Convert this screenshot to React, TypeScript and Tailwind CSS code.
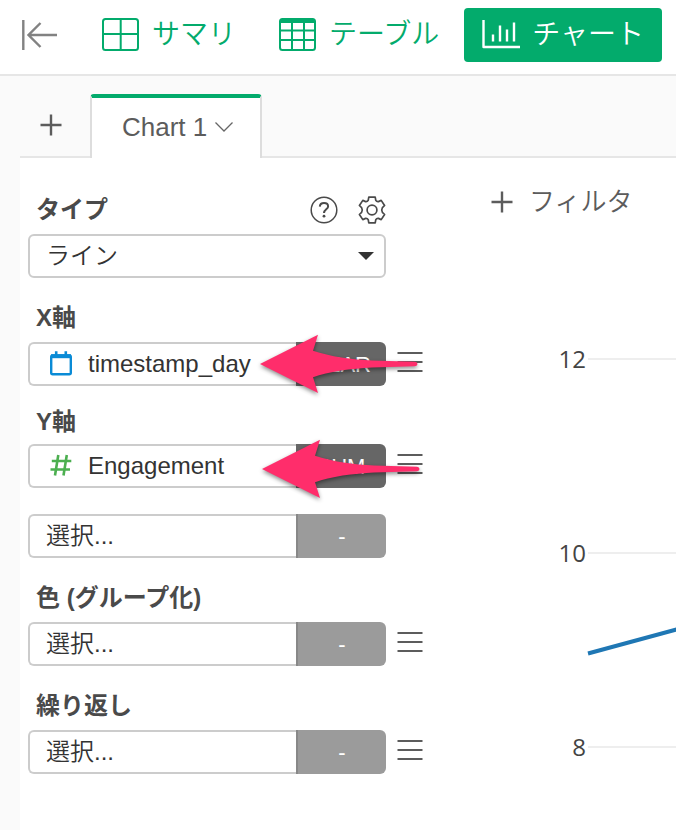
import type { ReactNode } from 'react';
import clsx from 'clsx';

const navItems = [
  { name: 'サマリ', icon: SummaryIcon, active: false },
  { name: 'テーブル', icon: TableIcon, active: false },
  { name: 'チャート', icon: ChartIcon, active: true },
];

const gridLines = [
  { label: '12', y: 119 },
  { label: '10', y: 313 },
  { label: '8', y: 507 },
];

function CollapseIcon() {
  return (
    <svg width="38" height="32" viewBox="0 0 38 32" fill="none" stroke="#828282" strokeWidth="2.4">
      <path d="M3.3 1v30M37 16H8M20.5 4 8.5 16l12 12" />
    </svg>
  );
}

function SummaryIcon() {
  return (
    <svg width="38" height="34" viewBox="0 0 38 34" fill="none" stroke="currentColor" strokeWidth="2">
      <rect x="1" y="1" width="35" height="31" rx="2.5" />
      <path d="M18.700 1v31M1 16h35" />
    </svg>
  );
}

function TableIcon() {
  return (
    <svg width="38" height="34" viewBox="0 0 38 34" fill="none" stroke="currentColor" strokeWidth="2">
      <rect x="1" y="1" width="35" height="31" rx="2.5" />
      <path d="M1 12.500h35M1 22h35M13 3v29M25 3v29" />
      <path d="M1 3h35" strokeWidth="4" />
    </svg>
  );
}

function ChartIcon() {
  return (
    <svg width="38" height="34" viewBox="0 0 38 34" fill="none" stroke="currentColor" strokeWidth="2.4">
      <path d="M1.500 2v27h36.500" strokeLinejoin="round" />
      <path d="M11 16.500v7M18 7.500v16M25 11.500v12M32 4.500v19" />
    </svg>
  );
}

function PlusIcon() {
  return (
    <svg width="22" height="22" viewBox="0 0 22 22" stroke="#5c5c5c" strokeWidth="2.4">
      <path d="M11 .5v21M.5 11h21" />
    </svg>
  );
}

function ChevronIcon() {
  return (
    <svg width="18" height="10" viewBox="0 0 18 10" fill="none" stroke="#666" strokeWidth="1.3">
      <path d="M.5.5 9 9 17.5.5" />
    </svg>
  );
}

function HelpIcon() {
  return (
    <svg width="28" height="28" viewBox="0 0 28 28" fill="none" stroke="#4a4a4a">
      <circle cx="14" cy="14" r="12.8" strokeWidth="1.5" />
      <path d="M9.800 10.600c.2-2.200 1.800-3.500 4.200-3.500 2.500 0 4.100 1.300 4.100 3.300 0 2.800-4.100 3-4.100 6.600" strokeWidth="2" />
      <circle cx="14" cy="20.200" r="1.400" fill="#4a4a4a" stroke="none" />
    </svg>
  );
}

function GearIcon() {
  return (
    <svg width="28" height="28" viewBox="0 0 28 28" fill="none" stroke="#4a4a4a" strokeWidth="1.7" strokeLinejoin="round">
      <circle cx="14" cy="14" r="4.900" />
      <path d="M10.800 1.200h6.400l.6 3.200q.8 1.400 2.600 1.200l2.800-1.200 3.400 5.100-2.200 2.100q-1.400 2.400 0 4.800l2.200 2.100-3.400 5.100-2.800-1.200q-1.800-.2-2.600 1.200l-.6 3.200h-6.400l-.6-3.200q-.8-1.400-2.600-1.200l-2.800 1.200-3.400-5.100 2.200-2.100q1.400-2.400 0-4.800L1.400 9.500l3.400-5.100 2.800 1.200q1.800.2 2.600-1.200z" />
    </svg>
  );
}

function CalendarIcon() {
  return (
    <svg width="22" height="26" viewBox="0 0 22 26" fill="none" stroke="#0a8bd6">
      <rect x="1.200" y="4.500" width="19.600" height="18.800" rx="1.500" strokeWidth="2.400" />
      <path d="M1 5.200h20" strokeWidth="4" />
      <path d="M6.200 .2v4M15.800 .2v4" strokeWidth="2.600" />
    </svg>
  );
}

function HashIcon() {
  return (
    <svg width="22" height="26" viewBox="0 0 22 26" fill="none" stroke="#4caf50" strokeWidth="2.600">
      <path d="M8.300 2 5 22.500M16.800 2 13.500 22.500M1.800 8h19.500M.5 16.500h19.500" />
    </svg>
  );
}

function MenuIcon() {
  return (
    <svg width="26" height="22" viewBox="0 0 26 22" stroke="#5c5c5c" strokeWidth="1.800">
      <path d="M.5 2h25M.5 11h25M.5 20h25" />
    </svg>
  );
}

// Pointer laid over a field, tip at the left
function Arrow({ className }: { className: string }) {
  return (
    <svg
      className={clsx('absolute pointer-events-none drop-shadow-[0_2px_2px_rgba(0,0,0,0.45)]', className)}
      width="160"
      height="60"
      viewBox="0 0 160 60"
      fill="#ff2d6b"
      aria-hidden="true"
    >
      <path d="M0 30 58 .7 53 16.700C70 22.500 92 25.500 112 26.500L155 27.800q2.500.4 2.500 2.200t-2.500 2.200L112 33.500C92 34.500 68 37.500 53 43.300L58 59z" />
    </svg>
  );
}

interface FieldProps {
  name: string;
  value: string;
  aggregate: string;
  icon?: ReactNode;
  menu?: boolean;
  children?: ReactNode;
}

function Field({ name, value, aggregate, icon, menu = true, children }: FieldProps) {
  return (
    <div className="relative flex items-center gap-[11px]">
      <div className="flex h-11 w-[358px]">
        <div className="flex flex-1 min-w-0 items-center rounded-l-md border-2 border-r-0 border-[#ccc] bg-white">
          {icon && <span className="ml-5">{icon}</span>}
          <select
            aria-label={name}
            className="h-full flex-1 min-w-0 appearance-none bg-transparent pl-4 text-2xl leading-8 font-[350] text-[#333] outline-none"
          >
            <option>{value}</option>
          </select>
        </div>
        <select
          aria-label={`${name} 集計`}
          className={clsx(
            'w-[90px] appearance-none rounded-r-md text-center text-[22px] text-white [text-align-last:center] outline-none',
            aggregate === '-' ? 'bg-[#9b9b9b] border-l-2 border-[#888]' : 'bg-[#666]'
          )}
        >
          <option>{aggregate}</option>
        </select>
      </div>
      {menu && (
        <button type="button" aria-label={`${name} メニュー`} className="pb-1">
          <MenuIcon />
        </button>
      )}
      {children}
    </div>
  );
}

function Label({ children }: { children: ReactNode }) {
  return <h2 className="pl-2 text-2xl leading-9 font-bold text-[#4a4a4a]">{children}</h2>;
}

export default function App() {
  return (
    <div className="flex min-h-screen flex-col overflow-hidden bg-[#fafafa] font-['Liberation_Sans','Noto_Sans_CJK_JP',sans-serif]">
      <header className="flex h-[76px] items-center border-b-2 border-[#e6e6e6] bg-white pb-1 pl-5">
        <button type="button" aria-label="閉じる" className="mr-[26px] shrink-0">
          <CollapseIcon />
        </button>
        <nav className="flex gap-[7px]">
          {navItems.map((item) => {
            const Icon = item.icon;
            return (
              <button
                key={item.name}
                type="button"
                className={clsx(
                  'flex h-[54px] shrink-0 items-center gap-3 rounded px-[18px] text-[28px] leading-9 font-[350] whitespace-nowrap',
                  item.active ? 'bg-[#03ab6c] text-white' : 'text-[#03ab6c]'
                )}
              >
                <Icon />
                {item.name}
              </button>
            );
          })}
        </nav>
      </header>

      <div className="ml-5 flex items-stretch pt-[18px]">
        <div className="flex w-[70px] items-center border-b-2 border-[#e6e6e6] pl-5">
          <button type="button" aria-label="チャートを追加">
            <PlusIcon />
          </button>
        </div>
        <button
          type="button"
          className="flex h-16 w-[172px] items-center gap-2 rounded-t-sm border-x-2 border-t-4 border-x-[#ddd] border-t-[#03ab6c] bg-white pb-0.5 pl-[30px] text-[26px] text-[#5c5c5c]"
        >
          Chart 1
          <ChevronIcon />
        </button>
        <div className="flex-1 border-b-2 border-[#e6e6e6]" />
      </div>

      <div className="ml-5 flex flex-1 bg-white">
        <aside className="w-[410px] shrink-0 pt-[34px] pl-2">
          <div className="flex w-[358px] items-center">
            <Label>タイプ</Label>
            <div className="ml-auto flex gap-5">
              <button type="button" aria-label="ヘルプ">
                <HelpIcon />
              </button>
              <button type="button" aria-label="設定">
                <GearIcon />
              </button>
            </div>
          </div>
          <div className="relative mt-1.5 h-11 w-[358px]">
            <select
              aria-label="タイプ"
              className="h-full w-full appearance-none rounded-md border-2 border-[#ccc] bg-white pl-4 text-2xl leading-8 font-[350] text-[#333] outline-none"
            >
              <option>ライン</option>
            </select>
            <svg className="pointer-events-none absolute top-[18px] right-3" width="16" height="8" viewBox="0 0 16 8" fill="#333">
              <path d="M0 0h16L8 8z" />
            </svg>
          </div>

          <section className="mt-[22px] flex flex-col gap-1.5">
            <Label>X軸</Label>
            <Field name="X軸" value="timestamp_day" aggregate="YEAR" icon={<CalendarIcon />}>
              <Arrow className="top-[-8px] left-[232px]" />
            </Field>
          </section>

          <section className="mt-[18px] flex flex-col gap-1">
            <Label>Y軸</Label>
            <Field name="Y軸" value="Engagement" aggregate="SUM" icon={<HashIcon />}>
              <Arrow className="top-[-5px] left-[234px]" />
            </Field>
            <div className="mt-[22px]">
              <Field name="Y軸 2" value="選択..." aggregate="-" menu={false} />
            </div>
          </section>

          <section className="mt-[22px] flex flex-col gap-1.5">
            <Label>色 (グループ化)</Label>
            <Field name="色" value="選択..." aggregate="-" />
          </section>

          <section className="mt-[22px] flex flex-col gap-1.5">
            <Label>繰り返し</Label>
            <Field name="繰り返し" value="選択..." aggregate="-" />
          </section>
        </aside>

        <main className="min-w-0 flex-1 pt-6">
          <button type="button" className="ml-[61px] flex h-10 items-center gap-4 text-[26px] font-[350] whitespace-nowrap text-[#5c5c5c]">
            <PlusIcon />
            フィルタ
          </button>
          <svg className="mt-[18px] h-[580px] w-full" role="img" aria-label="Chart 1">
            {gridLines.map((line) => (
              <g key={line.label}>
                <text x="156" y={line.y + 9} textAnchor="end" className="fill-[#444] font-['Open_Sans',sans-serif] text-2xl">
                  {line.label}
                </text>
                <line x1="158" x2="100%" y1={line.y} y2={line.y} stroke="#eee" strokeWidth="2" />
              </g>
            ))}
            <path d="M158 413.500 250 388.500" stroke="#1f77b4" strokeWidth="4" fill="none" />
          </svg>
        </main>
      </div>
    </div>
  );
}
